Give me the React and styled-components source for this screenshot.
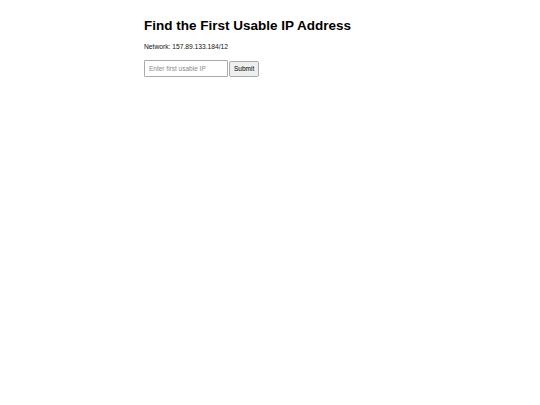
import React from "react";
import styled, { createGlobalStyle } from "styled-components";

const Global = createGlobalStyle`
  html, body { margin: 0; padding: 0; background: #fff; }
  body { font-family: "Liberation Sans", Arial, sans-serif; color: #000; }
`;

const Container = styled.div`
  width: 252px;
  margin: 0 auto;
  padding-top: 17px;
`;

const Title = styled.h1`
  font-size: 13.5px;
  font-weight: bold;
  margin: 0 0 8px 0;
  line-height: 17px;
`;

const Network = styled.p`
  font-size: 6.7px;
  margin: 0 0 9px 0;
  line-height: 9px;
  color: #111;
`;

const Form = styled.form`
  display: flex;
  align-items: center;
  gap: 1px;
`;

const Input = styled.input`
  width: 84px;
  height: 17px;
  box-sizing: border-box;
  font-size: 6.5px;
  font-family: "Liberation Sans", Arial, sans-serif;
  padding: 0 4px;
  border: 1px solid #aaa;
  border-radius: 1px;
  outline: none;
  &::placeholder { color: #8a8a8a; }
`;

const Button = styled.button`
  height: 16px;
  box-sizing: border-box;
  font-size: 6.5px;
  font-family: "Liberation Sans", Arial, sans-serif;
  padding: 0 4px;
  border: 1px solid #aaa;
  border-radius: 2px;
  background: #efefef;
  color: #000;
`;

export default function App() {
  return (
    <>
      <Global />
      <Container>
        <Title>Find the First Usable IP Address</Title>
        <Network>Network: 157.89.133.184/12</Network>
        <Form onSubmit={(e) => e.preventDefault()}>
          <Input placeholder="Enter first usable IP" />
          <Button type="submit">Submit</Button>
        </Form>
      </Container>
    </>
  );
}
